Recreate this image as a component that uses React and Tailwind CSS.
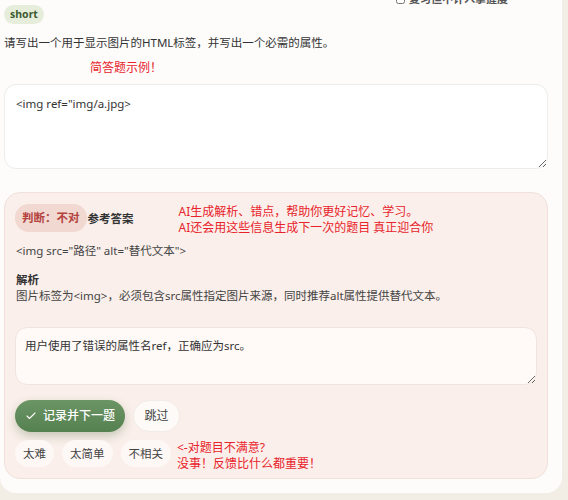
import { Check } from "lucide-react";

const chips = ["太难", "太简单", "不相关"];

function Note({ children, className = "" }) {
  return (
    <div className={`text-[12px] leading-[16px] text-[#e8232b] ${className}`}>{children}</div>
  );
}

export default function App() {
  return (
    <div className="min-h-[500px] bg-[#f3eee5] pr-[6px] pb-[8px] font-['Noto_Sans','Noto_Sans_CJK_SC',sans-serif] text-[#333]">
      <div className="rounded-b-2xl bg-[#fdfcfb] px-1 pb-[14px]">
        {/* header: type badge + review toggle */}
        <div className="flex items-start justify-between">
          <span className="mt-[5px] rounded-full bg-[#e6eedb] px-[6px] text-[10.5px] font-bold leading-[19px] text-[#3e5a30]">
            short
          </span>
          <label className="-mt-[9px] mr-[50px] flex items-center gap-[4px] text-[11px] font-semibold text-[#555]">
            <input type="checkbox" className="h-[9px] w-[9px]" />
            复习但不计入掌握度
          </label>
        </div>

        <p className="mt-[9px] text-[11.5px] leading-[20px]">
          请写出一个用于显示图片的HTML标签，并写出一个必需的属性。
        </p>
        <p className="mt-[5px] pl-[86px] text-[12px] leading-[20px] text-[#e8232b]">简答题示例！</p>

        <textarea
          readOnly
          defaultValue={'<img ref="img/a.jpg>'}
          className="mt-[6px] block h-[85px] w-[544px] rounded-xl border border-[#ececea] bg-white px-[11px] py-[9px] text-[11.5px] leading-[20px] text-[#333] outline-none"
        />

        {/* grading result */}
        <div className="mt-[23px] w-[544px] rounded-2xl border border-[#f2e1da] bg-[#faefea] px-[10px] pt-[11px] pb-[6px]">
          <div className="flex items-start">
            <span className="rounded-full bg-[#f1d8d1] px-[7px] text-[11.5px] font-bold leading-[28px] text-[#b4423d]">
              判断：不对
            </span>
            <span className="ml-px mt-[6px] text-[11.5px] font-bold text-[#333]">参考答案</span>
            <Note className="ml-[45px]">
              AI生成解析、错点，帮助你更好记忆、学习。
              <br />
              AI还会用这些信息生成下一次的题目 真正迎合你
            </Note>
          </div>

          <p className="mt-[5px] pl-px text-[11.5px] leading-[20px] text-[#444]">
            {'<img src="路径" alt="替代文本">'}
          </p>

          <p className="mt-[11px] pl-px text-[11.5px] font-bold leading-[16px]">解析</p>
          <p className="pl-px text-[11.5px] leading-[16px] text-[#444]">
            图片标签为&lt;img&gt;，必须包含src属性指定图片来源，同时推荐alt属性提供替代文本。
          </p>

          <textarea
            readOnly
            defaultValue="用户使用了错误的属性名ref，正确应为src。"
            className="mt-[23px] block h-[58px] w-[522px] rounded-xl border border-[#f1e4dd] bg-[#fffaf7] px-[9px] py-[8px] text-[11.5px] leading-[20px] text-[#333] outline-none"
          />

          <div className="mt-[15px] flex items-center gap-[8px]">
            <button className="flex h-[32px] w-[110px] items-center justify-center gap-[6px] rounded-full bg-gradient-to-b from-[#6b9564] to-[#55804f] text-[12px] font-medium text-white shadow-[0_4px_10px_rgba(80,110,70,0.3)]">
              <Check size={12} strokeWidth={2.2} />
              记录并下一题
            </button>
            <button className="h-[32px] w-[47px] rounded-full border border-[#f3ebe6] bg-[#fdfaf8] text-[12px] text-[#444]">
              跳过
            </button>
          </div>

          <div className="mt-[8px] flex items-start gap-[8px]">
            {chips.map((c) => (
              <button
                key={c}
                className="h-[27px] rounded-full bg-[#fdf8f5] px-[8px] text-[11.5px] text-[#444]"
              >
                {c}
              </button>
            ))}
            <Note className="-ml-[2px]">
              &lt;-对题目不满意?
              <br />
              没事！反馈比什么都重要！
            </Note>
          </div>
        </div>
      </div>
    </div>
  );
}
